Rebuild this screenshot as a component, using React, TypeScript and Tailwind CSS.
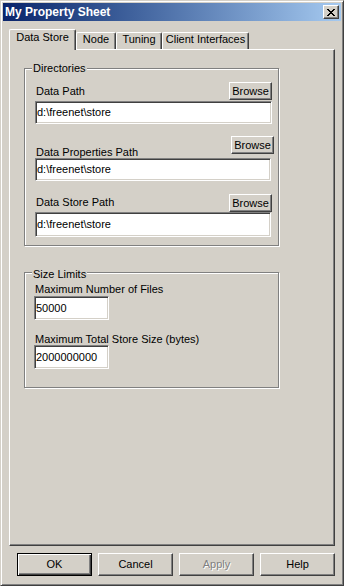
import type { ReactNode } from "react";

function Field({ value, className }: { value: string; className: string }) {
  return (
    <div
      className={
        "flex items-center bg-white pl-[1px] border border-t-[#808080] border-l-[#808080] border-b-white border-r-white shadow-[inset_1px_1px_0_#404040,inset_-1px_-1px_0_#D4D0C8] " +
        className
      }
    >
      {value}
    </div>
  );
}

function Browse() {
  return (
    <button className="w-[43px] h-[18px] flex items-center justify-center bg-[#D4D0C8] border border-t-white border-l-white border-b-[#404040] border-r-[#404040] shadow-[inset_-1px_-1px_0_#808080]">
      Browse
    </button>
  );
}

function Group({ title, titleTop, className, children }: { title: string; titleTop: string; className: string; children: ReactNode }) {
  return (
    <div
      className={
        "relative ml-[14px] w-[255px] border border-[#808080] shadow-[inset_1px_1px_0_#fff,1px_1px_0_#fff] flex flex-col " +
        className
      }
    >
      <span className={"absolute left-[7px] px-[1px] bg-[#D4D0C8] " + titleTop}>{title}</span>
      {children}
    </div>
  );
}

function Tab({ label, active, w }: { label: string; active?: boolean; w: string }) {
  return (
    <div
      className={
        "flex justify-center bg-[#D4D0C8] rounded-t-[2px] border-t border-l border-t-white border-l-white border-r border-r-[#404040] shadow-[inset_-1px_0_0_#808080] " +
        w +
        (active ? " h-[21px] -mb-px pt-[1px] relative z-10" : " h-[17px]")
      }
    >
      {label}
    </div>
  );
}

function DlgButton({ label, isDefault, disabled }: { label: string; isDefault?: boolean; disabled?: boolean }) {
  return (
    <button
      className={
        "w-[75px] h-[23px] flex items-center justify-center bg-[#D4D0C8] border " +
        (isDefault
          ? "border-black shadow-[inset_1px_1px_0_#fff,inset_-1px_-1px_0_#404040,inset_-2px_-2px_0_#808080]"
          : "border-t-white border-l-white border-b-[#404040] border-r-[#404040] shadow-[inset_-1px_-1px_0_#808080]") +
        (disabled ? " text-[#808080] [text-shadow:1px_1px_0_#fff]" : "")
      }
    >
      {label}
    </button>
  );
}

export default function App() {
  return (
    <div className="w-[344px] h-[586px] bg-[#D4D0C8] border border-t-[#D4D0C8] border-l-[#D4D0C8] border-b-[#404040] border-r-[#404040] shadow-[inset_1px_1px_0_#fff,inset_-1px_-1px_0_#808080] p-[2px] flex flex-col font-['Liberation_Sans',Arial,sans-serif] text-[11px] leading-[13px] text-black">
      {/* titelbalk */}
      <div className="h-[18px] flex items-center justify-between pl-[2px] pr-[2px] bg-linear-to-r from-[#0A246A] to-[#A6CAF0]">
        <span className="text-white font-bold text-[12px]">My Property Sheet</span>
        <button className="w-[16px] h-[14px] flex items-center justify-center bg-[#D4D0C8] border border-t-white border-l-white border-b-[#404040] border-r-[#404040] shadow-[inset_-1px_-1px_0_#808080]">
          <svg width="8" height="7" viewBox="0 0 8 7" shapeRendering="crispEdges">
            <path
              fill="#000"
              d="M0 0h2v1H0zM6 0h2v1H6zM1 1h2v1H1zM5 1h2v1H5zM2 2h4v1H2zM3 3h2v1H3zM2 4h4v1H2zM1 5h2v1H1zM5 5h2v1H5zM0 6h2v1H0zM6 6h2v1H6z"
            />
          </svg>
        </button>
      </div>

      {/* tabs */}
      <div className="mt-[8px] ml-[6px] h-[20px] flex items-end">
        <Tab label="Data Store" active w="w-[67px]" />
        <Tab label="Node" w="w-[40px]" />
        <Tab label="Tuning" w="w-[46px]" />
        <Tab label="Client Interfaces" w="w-[87px]" />
      </div>

      {/* paneel */}
      <div className="ml-[6px] w-[326px] h-[497px] border border-t-white border-l-white border-b-[#404040] border-r-[#404040] shadow-[inset_-1px_-1px_0_#808080] flex flex-col">
        <Group title="Directories" titleTop="-top-[7px]" className="mt-[18px] h-[178px]">
          <div className="mt-[13px] pl-[11px] pr-[6px] flex items-end justify-between">
            <span className="mb-[2px]">Data Path</span>
            <Browse />
          </div>
          <Field value="d:\freenet\store" className="mt-[1px] ml-[10px] mr-[6px] h-[23px]" />

          <div className="mt-[12px] pl-[11px] pr-[4px] flex items-start justify-between">
            <span className="mt-[10px]">Data Properties Path</span>
            <Browse />
          </div>
          <Field value="d:\freenet\store" className="-mt-px ml-[10px] mr-[7px] h-[23px]" />

          <div className="mt-[13px] pl-[11px] pr-[6px] flex items-start justify-between">
            <span className="mt-[2px]">Data Store Path</span>
            <Browse />
          </div>
          <Field value="d:\freenet\store" className="ml-[10px] mr-[7px] h-[25px]" />
        </Group>

        <Group title="Size Limits" titleTop="-top-[5px]" className="mt-[26px] h-[116px]">
          <span className="mt-[10px] pl-[10px]">Maximum Number of Files</span>
          <Field value="50000" className="ml-[9px] w-[75px] h-[24px]" />
          <span className="mt-[13px] pl-[10px]">Maximum Total Store Size (bytes)</span>
          <Field value="2000000000" className="-mt-px ml-[9px] w-[75px] h-[24px]" />
        </Group>
      </div>

      {/* knoppen */}
      <div className="mt-[7px] ml-[14px] flex gap-[6px]">
        <DlgButton label="OK" isDefault />
        <DlgButton label="Cancel" />
        <DlgButton label="Apply" disabled />
        <DlgButton label="Help" />
      </div>
    </div>
  );
}
